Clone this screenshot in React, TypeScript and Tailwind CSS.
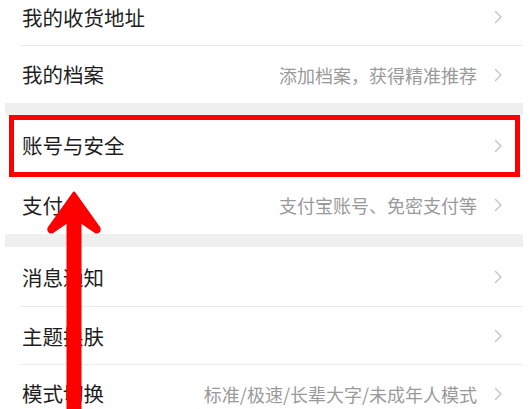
import React from "react";

const Chevron = () => (
  <svg width="9" height="14" viewBox="0 0 9 14" className="shrink-0">
    <polyline points="1.5,1.5 7,7 1.5,12.5" fill="none" stroke="#c4c4c4" strokeWidth="1.4" strokeLinecap="round" strokeLinejoin="round" />
  </svg>
);

type RowProps = { title: string; sub?: string; h?: string; divider?: boolean };

const Row = ({ title, sub, h = "h-[57px]", divider = false }: RowProps) => (
  <div className={`relative flex items-center bg-white pl-[17px] pr-[20px] ${h}`}>
    <span className="flex-1 text-[20.5px] text-[#1e1e1e] leading-none">{title}</span>
    {sub && <span className="mr-[17px] text-[18px] text-[#9a9a9a] leading-none">{sub}</span>}
    <Chevron />
    {divider && <div className="absolute bottom-0 left-[15px] right-0 h-px bg-[#ececec]" />}
  </div>
);

export default function App() {
  return (
    <div
      className="relative w-[530px] h-[409px] overflow-hidden bg-white"
      style={{ fontFamily: '"Noto Sans CJK SC", "Noto Sans", sans-serif' }}
    >
      <div className="mx-[5px] w-[518px] -mt-[12px] flex flex-col">
        <Row title="我的收货地址" h="h-[58px]" divider />
        <Row title="我的档案" sub="添加档案，获得精准推荐" h="h-[57px]" />
        <div className="h-[12px] bg-[#efefef]" />
        <Row title="账号与安全" h="h-[61px]" divider />
        <Row title="支付" sub="支付宝账号、免密支付等" h="h-[58px]" />
        <div className="h-[13px] bg-[#efefef]" />
        <Row title="消息通知" h="h-[60px]" divider />
        <Row title="主题换肤" h="h-[58px]" divider />
        <Row title="模式切换" sub="标准/极速/长辈大字/未成年人模式" h="h-[57px]" />
      </div>

      <div className="absolute left-[9px] top-[115px] w-[511px] h-[62px] border-[5px] border-[#fe0000]" />

      <svg className="absolute left-0 top-0" width="530" height="409" viewBox="0 0 530 409">
        <path
          d="M74 193 L99 228 Q100 232 96 232 L80 221 L80 409 L68 409 L68 221 L52 232 Q48 232 49 228 Z"
          fill="#fe0000"
          stroke="#fe0000"
          strokeWidth="3"
          strokeLinejoin="round"
        />
      </svg>
    </div>
  );
}
